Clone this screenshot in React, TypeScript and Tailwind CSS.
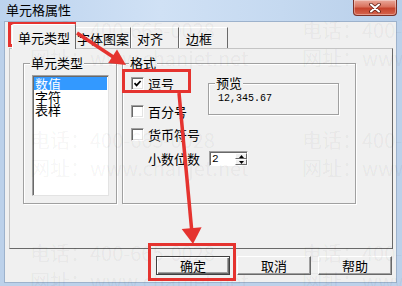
import React from "react";

function GroupBox({
  label,
  className,
  children,
}: {
  label: string;
  className: string;
  children?: React.ReactNode;
}) {
  return (
    <div
      className={
        "relative border border-[#a0a0a0] shadow-[inset_1px_1px_0_#ffffff,1px_1px_0_#ffffff] " +
        className
      }
    >
      <span className="absolute left-[6px] top-[-8px] bg-[#f0f0f0] px-[1px] leading-[14px] whitespace-nowrap">
        {label}
      </span>
      {children}
    </div>
  );
}

function Checkbox({ checked }: { checked?: boolean }) {
  return (
    <div className="relative w-[13px] h-[13px] shrink-0 bg-white border border-[#a0a0a0] border-r-white border-b-white shadow-[inset_1px_1px_0_#696969,inset_-1px_-1px_0_#e3e3e3]">
      {checked && (
        <svg
          className="absolute left-[1px] top-[1px]"
          width="9"
          height="9"
          viewBox="0 0 9 9"
        >
          <path
            d="M1.5 4.2 L3.6 6.4 L7.6 2"
            stroke="#000"
            strokeWidth="1.7"
            fill="none"
          />
        </svg>
      )}
    </div>
  );
}

function CheckRow({ checked, label }: { checked?: boolean; label: string }) {
  return (
    <div className="flex items-center h-[13px] gap-[4px]">
      <Checkbox checked={checked} />
      <span className="leading-[14px] whitespace-nowrap">{label}</span>
    </div>
  );
}

function Spinner() {
  return (
    <div className="flex w-[39px] h-[15px] bg-white border border-[#a0a0a0] border-r-white border-b-white shadow-[inset_1px_1px_0_#696969]">
      <span className="pl-[2px] pt-[1px] font-['Liberation_Mono',monospace] text-[11px] leading-[12px]">
        2
      </span>
      <div className="ml-auto mt-[1px] flex flex-col w-[12px] h-[12px]">
        <div className="flex items-center justify-center h-[6px] bg-[#f0f0f0] border-t border-l border-white border-r border-b border-r-[#696969] border-b-[#696969]">
          <svg width="5" height="3" viewBox="0 0 5 3">
            <path d="M2.5 0 L5 3 L0 3 Z" fill="#000" />
          </svg>
        </div>
        <div className="flex items-center justify-center h-[6px] bg-[#f0f0f0] border-t border-l border-white border-r border-b border-r-[#696969] border-b-[#696969]">
          <svg width="5" height="3" viewBox="0 0 5 3">
            <path d="M0 0 L5 0 L2.5 3 Z" fill="#000" />
          </svg>
        </div>
      </div>
    </div>
  );
}

function Watermark() {
  const rows = [20, 130, 243];
  const cols = [30, 302];
  return (
    <div className="absolute left-0 top-0 w-[402px] h-[286px] pointer-events-none overflow-hidden text-[20px] leading-[20px] text-[rgba(0,0,0,0.05)] font-['Noto_Sans_CJK_SC',sans-serif]">
      {rows.map((y) =>
        cols.map((x) => (
          <React.Fragment key={`${x}-${y}`}>
            <span className="absolute whitespace-nowrap" style={{ left: x, top: y }}>
              电话：400-665-0028
            </span>
            <span className="absolute whitespace-nowrap" style={{ left: x, top: y + 28 }}>
              网址：www.chanjet.net
            </span>
          </React.Fragment>
        ))
      )}
    </div>
  );
}

function Annotations() {
  const red = "#e5332f";
  return (
    <svg
      className="absolute left-0 top-0 pointer-events-none"
      width="402"
      height="286"
      viewBox="0 0 402 286"
    >
      <rect x="9.5" y="23.5" width="65" height="22" fill="none" stroke={red} strokeWidth="3" />
      <rect x="123.5" y="70.5" width="66" height="21" fill="none" stroke={red} strokeWidth="3" />
      <rect x="149.5" y="244.5" width="85" height="35" fill="none" stroke={red} strokeWidth="3" />
      <line x1="77" y1="33" x2="114" y2="57.5" stroke={red} strokeWidth="3.5" />
      <path d="M126 65 L117 49.6 L108.2 63 Z" fill={red} />
      <line x1="179" y1="93" x2="191.6" y2="229" stroke={red} strokeWidth="3.5" />
      <path d="M193 244 L181.7 229 L201.6 227.2 Z" fill={red} />
    </svg>
  );
}

export default function App() {
  return (
    <div className="relative w-[402px] h-[286px] overflow-hidden bg-[#bcd1ea] font-['Noto_Sans_CJK_SC','Liberation_Sans',sans-serif] text-[13px] text-black">
      <div className="flex flex-col w-[402px] h-[286px]">
        {/* title bar */}
        <div className="flex items-start justify-between h-[21px] pl-[6px] pr-[5px] bg-[linear-gradient(90deg,#bcd3ee,#d0e1f5_40%,#c5d9f0_70%,#b8cfea)]">
          <span className="pt-[2px] leading-[16px]">单元格属性</span>
          <div className="flex items-center justify-center w-[44px] h-[16px] rounded-b-[4px] border border-t-0 border-[#7b3128] bg-[linear-gradient(180deg,#eaa99b_0%,#d9725d_45%,#c6432c_55%,#d5654e_100%)] shadow-[inset_0_0_0_1px_rgba(255,255,255,0.35)]">
            <svg width="12" height="10" viewBox="0 0 12 10">
              <path d="M2 1.5 L10 8.5 M10 1.5 L2 8.5" stroke="#5a1a10" strokeWidth="3.6" strokeLinecap="round" />
              <path d="M2 1.5 L10 8.5 M10 1.5 L2 8.5" stroke="#ffffff" strokeWidth="2.1" strokeLinecap="round" />
            </svg>
          </div>
        </div>

        {/* client area */}
        <div className="flex flex-col flex-1 ml-[4px] mr-[5px] mb-[3px] bg-[#f0f0f0] border border-[#9db2cc] pl-[4px] pr-[3px]">
          {/* tabs */}
          <div className="flex items-end h-[26px] pl-[3px]">
            <div className="relative z-10 -mb-[1px] w-[64px] h-[25px] bg-[#f0f0f0] border-t border-l border-white border-r border-r-[#696969] rounded-t-[2px] pl-[5px] pt-[6px] leading-[14px] whitespace-nowrap">
              单元类型
            </div>
            <div className="w-[55px] h-[21px] border-t border-white border-r border-r-[#696969] pl-[1px] pt-[4px] leading-[14px] whitespace-nowrap">
              字体图案
            </div>
            <div className="w-[48px] h-[21px] border-t border-l border-white border-r border-r-[#696969] pl-[5px] pt-[4px] leading-[14px] whitespace-nowrap">
              对齐
            </div>
            <div className="w-[49px] h-[21px] border-t border-l border-white border-r border-r-[#696969] pl-[6px] pt-[4px] leading-[14px] whitespace-nowrap">
              边框
            </div>
          </div>

          {/* tab panel */}
          <div className="flex gap-[5px] h-[201px] border border-[#c4c4c4] border-r-[#696969] border-b-[#696969] pl-[13px] pt-[14px]">
            <GroupBox label="单元类型" className="w-[94px] h-[141px] pl-[8px] pt-[11px]">
              <div className="w-[77px] h-[121px] bg-white border border-[#a0a0a0] border-r-[#e3e3e3] border-b-[#e3e3e3] shadow-[inset_1px_1px_0_#696969]">
                <div className="flex flex-col pt-[1px] pl-[1px] pr-[1px] leading-[13px]">
                  <div className="h-[13px] bg-[#3399ff] text-white pl-[1px]">数值</div>
                  <div className="h-[13px] pl-[1px]">字符</div>
                  <div className="h-[13px] pl-[1px]">表样</div>
                </div>
              </div>
            </GroupBox>

            <GroupBox label="格式" className="w-[234px] h-[141px] pl-[8px] pt-[13px]">
              <div className="flex">
                <div className="w-[77px] flex flex-col">
                  <CheckRow checked label="逗号" />
                  <div className="mt-[15px]">
                    <CheckRow label="百分号" />
                  </div>
                  <div className="mt-[10px]">
                    <CheckRow label="货币符号" />
                  </div>
                </div>
                <GroupBox label="预览" className="mt-[6px] w-[131px] h-[32px] pl-[9px] pt-[9px]">
                  <div className="font-['Liberation_Mono',monospace] text-[10px] leading-[12px]">
                    12,345.67
                  </div>
                </GroupBox>
              </div>
              <div className="mt-[10px] flex items-center pl-[17px]">
                <span className="w-[61px] leading-[14px] whitespace-nowrap">小数位数</span>
                <Spinner />
              </div>
            </GroupBox>
          </div>

          {/* buttons */}
          <div className="flex justify-end gap-[7px] mt-[7px] pr-[1px]">
            <button className="w-[74px] h-[19px] bg-[#f0f0f0] border border-[#404040] shadow-[inset_1px_1px_0_#ffffff,inset_-1px_-1px_0_#696969,inset_-2px_-2px_0_#a0a0a0] leading-[14px]">
              确定
            </button>
            <button className="w-[74px] h-[19px] bg-[#f0f0f0] border border-white border-r-[#696969] border-b-[#696969] shadow-[inset_-1px_-1px_0_#a0a0a0] leading-[14px]">
              取消
            </button>
            <button className="w-[74px] h-[19px] bg-[#f0f0f0] border border-white border-r-[#696969] border-b-[#696969] shadow-[inset_-1px_-1px_0_#a0a0a0] leading-[14px]">
              帮助
            </button>
          </div>
        </div>
      </div>

      <Watermark />
      <Annotations />
    </div>
  );
}
